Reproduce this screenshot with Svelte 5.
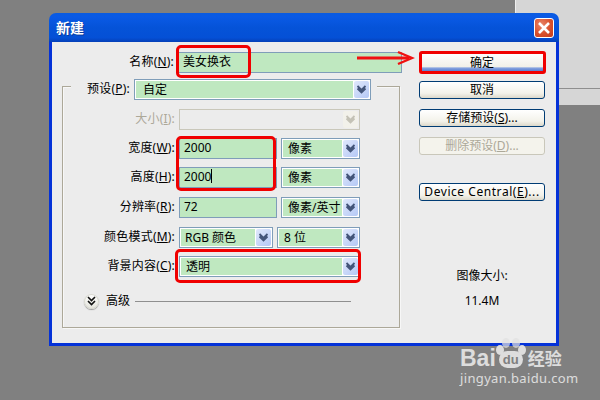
<script>
  const rows = [
    { label: '宽度', key: 'W', field: '2000', unit: '像素', cls: 'r1' },
    { label: '高度', key: 'H', field: '2000', unit: '像素', caret: true, cls: 'r2' },
    { label: '分辨率', key: 'R', field: '72', unit: '像素/英寸', cls: 'r3' }
  ];
</script>

{#snippet chevron()}
  <svg width="11" height="9" viewBox="0 0 11 9"><path d="M1.5 1 5.5 5 9.5 1 M1.5 3.5 5.5 7.5 9.5 3.5" fill="none" stroke="currentColor" stroke-width="1.8"/></svg>
{/snippet}

{#snippet select(text, cls = '')}
  <div class="select {cls}">
    <span class="select-text">{text}</span>
    <span class="arrow">{@render chevron()}</span>
  </div>
{/snippet}

<div class="desktop">
  <div class="backdrop"><div class="backdrop-line"></div></div>

  <div class="dialog">
    <header class="titlebar">
      <span class="title">新建</span>
      <span class="close" aria-label="关闭">
        <svg width="14" height="14" viewBox="0 0 14 14"><path d="M2 2 12 12 M12 2 2 12" stroke="#fff" stroke-width="2.6"/></svg>
      </span>
    </header>

    <div class="body">
      <div class="left">
        <div class="name-row">
          <label class="label">名称(<u>N</u>):</label>
          <div class="field name-field">美女换衣</div>
        </div>

        <div class="frame">
          <div class="preset-row">
            <label class="label">预设(<u>P</u>):</label>
            {@render select('自定', 'preset')}
          </div>

          <div class="row first">
            <label class="label disabled">大小(<u>I</u>):</label>
            <div class="select disabled-select">
              <span class="select-text"></span>
              <span class="arrow">{@render chevron()}</span>
            </div>
          </div>

          {#each rows as r}
            <div class="row {r.cls}">
              <label class="label">{r.label}(<u>{r.key}</u>):</label>
              <div class="pair">
                <div class="field num">{r.field}{#if r.caret}<i class="caret"></i>{/if}</div>
                {@render select(r.unit, 'unit')}
              </div>
            </div>
          {/each}

          <div class="row r4">
            <label class="label">颜色模式(<u>M</u>):</label>
            <div class="pair">
              {@render select('RGB 颜色', 'mode')}
              {@render select('8 位', 'unit')}
            </div>
          </div>

          <div class="row r5">
            <label class="label">背景内容(<u>C</u>):</label>
            {@render select('透明')}
          </div>

          <div class="advanced">
            <span class="round">
              <svg width="9" height="10" viewBox="0 0 9 10"><path d="M1 1 4.5 4.5 8 1 M1 5 4.5 8.5 8 5" fill="none" stroke="#111" stroke-width="1.6"/></svg>
            </span>
            <span class="adv-text">高级</span>
            <span class="adv-line"></span>
          </div>
        </div>
      </div>

      <div class="right">
        <button class="btn primary">确定</button>
        <button class="btn first-after">取消</button>
        <button class="btn">存储预设(<u>S</u>)...</button>
        <button class="btn off">删除预设(<u>D</u>)...</button>
        <button class="btn device">Device Central(<u>E</u>)...</button>
        <div class="size-label">图像大小:</div>
        <div class="size-value">11.4M</div>
      </div>
    </div>
  </div>

  <div class="mark m-name"></div>
  <div class="mark m-ok"></div>
  <div class="mark m-dim"></div>
  <div class="mark m-bg"></div>
  <svg class="red-arrow" width="58" height="16" viewBox="0 0 58 16">
    <path d="M0 8H52" stroke="#f01010" stroke-width="3"/>
    <path d="M41 2 55 8 41 14" fill="none" stroke="#f01010" stroke-width="2.4"/>
  </svg>

  <div class="watermark">
    <div class="wm-main"><span class="wm-bai">Bai</span><span class="paw"><i></i><i></i><i></i><i></i><b>du</b></span><span class="wm-cn">经验</span></div>
    <div class="wm-url">jingyan.baidu.com</div>
  </div>
</div>

<style>
  :global(body) { margin: 0; }
  .desktop {
    position: relative; width: 600px; height: 400px; overflow: hidden; background: #808080;
    font: 12px/16px "Noto Sans", "Noto Sans CJK SC", sans-serif; color: #000;
  }
  .backdrop {
    position: absolute; left: 515px; top: 0; right: 0; height: 105px;
    background: #d6d6d6; border-left: 1px solid #eee; box-sizing: border-box;
  }
  .backdrop-line { margin-top: 88px; height: 1px; background: #8e8e8e; }

  .dialog {
    position: absolute; left: 49px; top: 13px; width: 510px; height: 333px;
    display: flex; flex-direction: column; border-radius: 7px 7px 0 0; overflow: hidden;
  }
  .titlebar {
    height: 29px; flex: none; display: flex; align-items: center; justify-content: space-between;
    padding: 0 5px 0 7px;
    background: linear-gradient(#0a5be0 0, #0a5ae6 12%, #0553d8 50%, #0450d6 85%, #0540b8 100%);
  }
  .title { color: #fff; font-weight: 700; font-size: 14px; text-shadow: 1px 1px 0 #0a3a9a; }
  .close {
    box-sizing: border-box; width: 20px; height: 20px; border: 1px solid #fff; border-radius: 3px;
    background: radial-gradient(circle at 35% 30%, #e8866a, #d9502c 55%, #c23c1c);
    display: flex; align-items: center; justify-content: center;
  }
  .body {
    flex: 1; display: flex; background: #ececec;
    border: solid #0432d8; border-width: 0 3px 3px 3px;
  }
  .left { box-sizing: border-box; width: 364px; padding: 10px 0 0 10px; }
  .label { white-space: nowrap; text-align: right; position: relative; top: -1px; letter-spacing: .2px; }
  .label.disabled { color: #aca899; }

  .name-row { display: flex; align-items: center; height: 21px; justify-content: flex-end; gap: 3px; width: 340px; }
  .field {
    box-sizing: border-box; height: 21px; background: #bfe8c0; border: 1px solid #7f9db9;
    padding-left: 5px; line-height: 17px; white-space: nowrap;
  }
  .name-field { width: 225px; }

  .frame {
    box-sizing: border-box; width: 338px; height: 242px; margin-top: 13px;
    border: 1px solid #aca899; box-shadow: inset 1px 1px 0 #f7f7f7, 1px 1px 0 #f7f7f7;
  }
  .preset-row {
    display: flex; align-items: center; justify-content: flex-end; gap: 4px; margin: -8px 0 0 8px;
    width: 306px; height: 21px; background: #ececec; padding-right: 6px; box-sizing: border-box;
  }
  .row { display: flex; align-items: center; gap: 4px; height: 21px; margin-top: 8px; padding-right: 39px; justify-content: flex-end; }
  .first { margin-top: 9px; }
  .r3 { margin-top: 9px; }
  .r4 { margin-top: 9px; }
  .row > .select { width: 181px; }
  .pair { display: flex; gap: 4px; width: 181px; }
  .num { width: 98px; padding-left: 4px; }
  .caret { display: inline-block; width: 1px; height: 14px; background: #000; vertical-align: -2px; }

  .select {
    box-sizing: border-box; height: 21px; display: flex; background: #fff;
    border: 1px solid #7f9db9; padding: 1px; line-height: 18px;
  }
  .select-text { flex: 1; min-width: 0; background: #bfe8c0; padding-left: 3px; white-space: nowrap; overflow: hidden; }
  .arrow {
    width: 15px; flex: none; display: flex; align-items: center; justify-content: center; margin-left: 1px;
    color: #43557a; background: linear-gradient(135deg, #e0e8fc, #b4c8f5); border-radius: 2px;
  }
  .preset { width: 237px; }
  .preset .select-text { padding-left: 7px; }
  .unit { flex: 1; }
  .unit .select-text { padding-left: 5px; }
  .mode { width: 94px; }
  .mode .select-text { padding-left: 4px; }
  .r5 .select-text { padding-left: 5px; }
  .disabled-select { border-color: #c9c7ba; background: #ececec; }
  .disabled-select .select-text { background: #ececec; }
  .disabled-select .arrow { color: #c4c2b6; background: #f2f1ea; }

  .advanced { display: flex; align-items: center; margin: 16px 0 0 21px; height: 16px; width: 267px; }
  .round {
    width: 15px; height: 15px; border-radius: 50%; background: linear-gradient(#fff, #e4e4dc);
    box-shadow: 0 1px 1px #999, inset 0 0 0 1px #d8d8d0; display: flex; align-items: center; justify-content: center;
  }
  .adv-text { margin-left: 7px; }
  .adv-line { flex: 1; height: 1px; background: #8f8f8f; margin-left: 5px; }

  .right { width: 126px; margin-left: 3px; padding-top: 10px; display: flex; flex-direction: column; align-items: stretch; }
  .btn {
    box-sizing: border-box; width: 126px; height: 18px; padding: 0; margin: 10px 0 0; font: inherit; line-height: 14px; color: #000;
    background: linear-gradient(#fff, #f3f2ea 70%, #dcd8ca);
    border: 1px solid #003c74; border-radius: 3px; white-space: nowrap;
  }
  .btn.primary {
    margin-top: 0; height: 20px; padding-top: 2px;
    background: linear-gradient(#fff, #f1f0e8 78%, #8aa6e0 82%, #5a7fd0);
  }
  .btn.first-after { margin-top: 9px; }
  .btn.off { color: #aca899; border-color: #c9c7ba; background: #f4f3ec; }
  .btn.device { margin-top: 28px; letter-spacing: .55px; }
  .size-label { margin-top: 67px; text-align: center; }
  .size-value { margin-top: 9px; text-align: center; }

  .mark { position: absolute; box-sizing: border-box; border: 3px solid #f00000; border-radius: 5px; }
  .m-name { left: 176px; top: 45px; width: 75px; height: 33px; }
  .m-ok { left: 419px; top: 51px; width: 127px; height: 23px; border-radius: 3px; }
  .m-dim { left: 176px; top: 136px; width: 100px; height: 55px; }
  .m-bg { left: 175px; top: 249px; width: 186px; height: 34px; }
  .red-arrow { position: absolute; left: 357px; top: 50px; }

  .watermark { position: absolute; left: 460px; top: 340px; color: #e2e2e2; font-family: "Liberation Sans", sans-serif; opacity: .95; }
  .wm-main { display: flex; align-items: center; line-height: 24px; margin-top: 6px; }
  .wm-bai { font-size: 23px; font-weight: 700; }
  .wm-cn { font: 700 17px/24px "Noto Sans CJK SC", sans-serif; margin-left: 2px; }
  .paw { position: relative; display: block; width: 30px; height: 24px; }
  .paw b { position: absolute; left: 3px; top: 5px; width: 24px; height: 17px; border-radius: 9px; background: #e2e2e2; color: #808080; font-size: 13px; line-height: 17px; text-align: center; }
  .paw i { position: absolute; width: 8px; height: 10px; border-radius: 50%; background: #e2e2e2; }
  .paw i:nth-child(1) { left: 0; top: -1px; }
  .paw i:nth-child(2) { left: 6px; top: -8px; opacity: .75; }
  .paw i:nth-child(3) { left: 16px; top: -8px; opacity: .75; }
  .paw i:nth-child(4) { left: 22px; top: -1px; }
  .wm-url { font-size: 13px; line-height: 16px; letter-spacing: .35px; font-family: "Noto Sans", sans-serif; }
</style>
